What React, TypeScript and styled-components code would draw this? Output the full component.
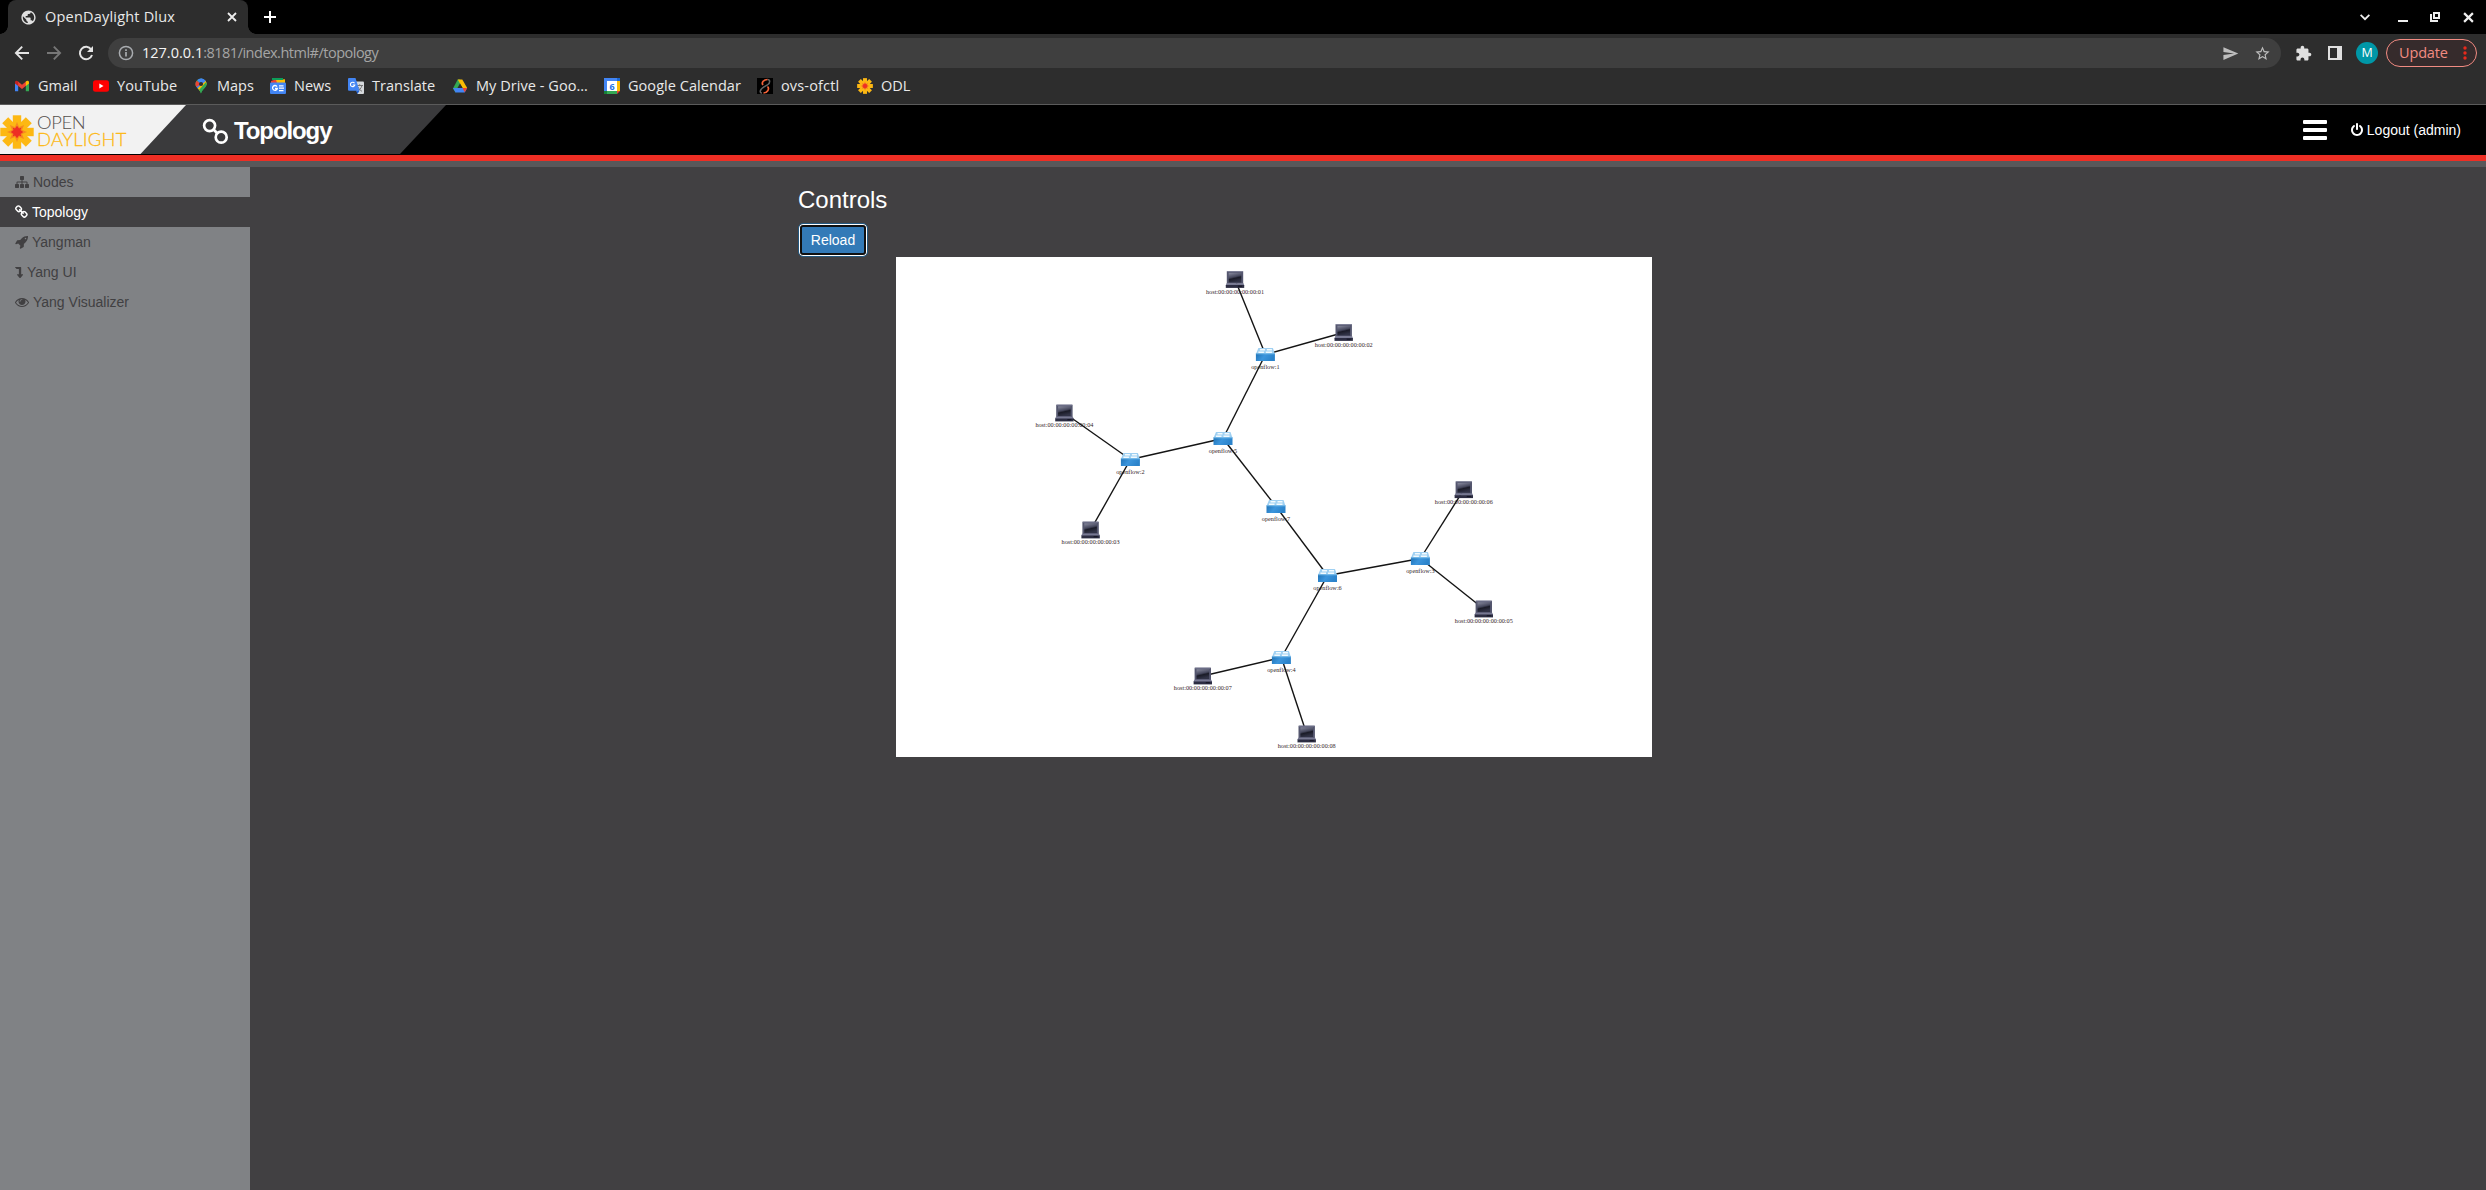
import React from "react";
import styled, { createGlobalStyle } from "styled-components";

const GlobalStyle = createGlobalStyle`
  * { box-sizing: border-box; }
  html, body, #root { margin: 0; height: 100%; }
  body {
    background: #414042;
    font-family: "Liberation Sans", Arial, sans-serif;
    font-size: 14px;
    overflow: hidden;
  }
  svg { display: block; flex: none; }
`;

/* ---------- browser window ---------- */

const Page = styled.div`
  width: 2486px;
  height: 1190px;
  display: flex;
  flex-direction: column;
`;

const Chrome = styled.div`
  flex: none;
  height: 105px;
  background: #2d2d2d;
  border-bottom: 1px solid #5b5b5b;
  font-family: "Open Sans", "Noto Sans", sans-serif;
  font-size: 14.5px;
  color: #e9e9e9;
`;

const TitleBar = styled.div`
  height: 34px;
  background: #000;
  display: flex;
  align-items: center;
  padding-left: 8px;
`;

const Tab = styled.div`
  width: 240px;
  height: 34px;
  display: flex;
  align-items: center;
  padding: 0 11px 0 12px;
  background: #2d2d2d;
  border-radius: 8px 8px 0 0;
  position: relative;
  &::before,
  &::after {
    content: "";
    position: absolute;
    bottom: 0;
    width: 8px;
    height: 8px;
  }
  &::before {
    left: -8px;
    background: radial-gradient(circle at 0 0, #000 7.5px, #2d2d2d 8px);
  }
  &::after {
    right: -8px;
    background: radial-gradient(circle at 100% 0, #000 7.5px, #2d2d2d 8px);
  }
`;

const Label = styled.span<{ $w: number; $ls?: number }>`
  flex: none;
  width: ${(p) => p.$w}px;
  letter-spacing: ${(p) => p.$ls ?? 0}px;
  white-space: nowrap;
  line-height: 20px;
`;

const TabTitle = styled(Label)`
  margin: 0 auto 0 8px;
`;

const NewTab = styled.div`
  margin-left: 16px;
`;

const WindowControls = styled.div`
  margin-left: auto;
  display: flex;
  align-items: center;
  padding-right: 12px;
`;

const Spacer = styled.div<{ $w: number }>`
  flex: none;
  width: ${(p) => p.$w}px;
`;

const Toolbar = styled.div`
  height: 38px;
  display: flex;
  align-items: center;
  padding: 0 9px 0 14px;
`;

const NavButtons = styled.div`
  display: flex;
  gap: 16px;
  margin-right: 14px;
`;

const Omnibox = styled.div`
  flex: 1;
  height: 30px;
  border-radius: 15px;
  background: #3f3f3f;
  display: flex;
  align-items: center;
  padding: 0 10px;
  color: #a5a5a5;
`;

const Url = styled(Label)`
  margin: 0 auto 0 8px;
  b {
    font-weight: 400;
    letter-spacing: 0;
    color: #f4f4f4;
  }
`;

const Avatar = styled.div`
  width: 22px;
  height: 22px;
  border-radius: 50%;
  background: #0097a7;
  color: #fff;
  font-size: 12.5px;
  line-height: 22px;
  text-align: center;
`;

const UpdatePill = styled.div`
  width: 91px;
  height: 28px;
  margin-left: 8px;
  border: 1px solid #f28b82;
  border-radius: 14px;
  background: #362b2c;
  color: #f28b82;
  display: flex;
  align-items: center;
  padding-left: 12px;
  gap: 14px;
`;

const Bookmarks = styled.div`
  height: 28px;
  display: flex;
  align-items: center;
  gap: 16px;
  padding-left: 14px;
`;

const Bookmark = styled.div`
  display: flex;
  align-items: center;
  gap: 8px;
`;

/* ---------- application ---------- */

const Header = styled.header`
  flex: none;
  height: 50px;
  background: #000;
  display: flex;
  align-items: center;
`;

const LogoPanel = styled.div`
  width: 446px;
  height: 49px;
  align-self: flex-start;
  background: #3a3a3c;
  clip-path: polygon(0 0, 100% 0, 400px 100%, 0 100%);
  display: flex;
`;

const Logo = styled.div`
  width: 186px;
  height: 49px;
  background: #f2f2f2;
  clip-path: polygon(0 0, 100% 0, 140.5px 100%, 0 100%);
  display: flex;
  align-items: center;
  padding-top: 4px;
`;

const Wordmark = styled.div`
  margin: -1px 0 0 3px;
  font-family: Lato, sans-serif;
  font-weight: 300;
  font-size: 18.4px;
  line-height: 17.5px;
`;

const WordTop = styled.div`
  color: #55504d;
  letter-spacing: -0.4px;
`;

const WordBottom = styled.div`
  color: #fdb813;
  letter-spacing: 0.25px;
  -webkit-text-stroke: 0.3px #fdb813;
`;

const SectionTitle = styled.div`
  display: flex;
  align-items: center;
  gap: 5px;
  padding: 2px 0 0 16px;
  color: #fff;
  font-size: 24px;
  font-weight: 700;
  letter-spacing: -1.1px;
  svg {
    margin-top: 1px;
  }
`;

const HeaderRight = styled.div`
  margin-left: auto;
  display: flex;
  align-items: center;
  padding: 0 25px 1px 0;
  color: #fff;
`;

const Burger = styled.div`
  width: 24px;
  display: grid;
  gap: 4px;
  margin-right: 24px;
`;

const BurgerBar = styled.i`
  height: 4px;
  border-radius: 1px;
  background: #fff;
`;

const Logout = styled.div`
  display: flex;
  align-items: center;
  gap: 4px;
  padding-top: 1px;
`;

const Stripe = styled.div<{ $color: string }>`
  flex: none;
  height: 6px;
  background: ${(p) => p.$color};
`;

const Body = styled.div`
  flex: 1;
  display: flex;
  min-height: 0;
`;

const Sidebar = styled.nav`
  width: 250px;
  background: #808285;
`;

const NavItem = styled.div<{ $active?: boolean }>`
  height: 30px;
  padding-left: 15px;
  display: flex;
  align-items: center;
  gap: 4px;
  color: ${(p) => (p.$active ? "#fff" : "#414042")};
  background: ${(p) => (p.$active ? "#414042" : "transparent")};
`;

const Main = styled.main`
  flex: 1;
  padding: 20px 0 0 548px;
`;

const Heading = styled.h3`
  margin: 0 0 10px;
  font-size: 24px;
  font-weight: 400;
  line-height: 26px;
  color: #fff;
`;

const ReloadButton = styled.button`
  display: block;
  width: 70px;
  height: 34px;
  padding: 0;
  border: 1px solid #24587f;
  border-radius: 5px;
  background: #337ab7;
  box-shadow: inset 0 0 0 1px #fff, inset 0 0 0 3px #101010;
  color: #fff;
  font: 14px "Liberation Sans", Arial, sans-serif;
`;

const Canvas = styled.div`
  width: 756px;
  height: 500px;
  margin-left: 98px;
  background: #fff;
`;

/* ---------- icons ---------- */

const FA = {
  sitemap:
    "M1792 1248v320q0 40-28 68t-68 28h-320q-40 0-68-28t-28-68v-320q0-40 28-68t68-28h96v-192h-512v192h96q40 0 68 28t28 68v320q0 40-28 68t-68 28h-320q-40 0-68-28t-28-68v-320q0-40 28-68t68-28h96v-192h-512v192h96q40 0 68 28t28 68v320q0 40-28 68t-68 28h-320q-40 0-68-28t-28-68v-320q0-40 28-68t68-28h96v-192q0-52 38-90t90-38h512v-192h-96q-40 0-68-28t-28-68v-320q0-40 28-68t68-28h320q40 0 68 28t28 68v320q0 40-28 68t-68 28h-96v192h512q52 0 90 38t38 90v192h96q40 0 68 28t28 68z",
  link: "M1456 1216q0-40-28-68l-208-208q-28-28-68-28-42 0-72 32 3 3 19 18.5t21.5 21.5 15 19 13 25.5 3.5 27.5q0 40-28 68t-68 28q-15 0-27.5-3.5t-25.5-13-19-15-21.5-21.5-18.5-19q-33 31-33 73 0 40 28 68l206 207q27 27 68 27 40 0 68-26l147-146q28-28 28-67zm-703-705q0-40-28-68l-206-207q-28-28-68-28-39 0-68 27l-147 146q-28 28-28 67 0 40 28 68l208 208q27 27 68 27 42 0 72-31-3-3-19-18.5t-21.5-21.5-15-19-13-25.5-3.5-27.5q0-40 28-68t68-28q15 0 27.5 3.5t25.5 13 19 15 21.5 21.5 18.5 19q33-31 33-73zm895 705q0 120-85 203l-147 146q-83 83-203 83-121 0-204-85l-206-207q-83-83-83-203 0-123 88-209l-88-88q-86 88-208 88-120 0-204-84l-208-208q-84-84-84-204t85-203l147-146q83-83 203-83 121 0 204 85l206 207q83 83 83 203 0 123-88 209l88 88q86-88 208-88 120 0 204 84l208 208q84 84 84 204z",
  rocket:
    "M1440 448q0-40-28-68t-68-28-68 28-28 68 28 68 68 28 68-28 28-68zm224-288q0 249-75.5 430.5t-253.5 360.5q-81 80-195 176l-20 379q-2 16-16 26l-384 224q-7 4-16 4-12 0-23-9l-64-64q-13-14-8-32l85-276-281-281-276 85q-3 1-9 1-14 0-23-9l-64-64q-17-19-5-39l224-384q10-14 26-16l379-20q96-114 176-195 188-187 358-258t431-71q14 0 24 9.5t10 22.5z",
  levelDown:
    "M128 256h700q60 0 60 60v852h180q50 0 62 36 10 30-20 66l-320 380q-50 50-100 0l-320-380q-30-36-20-66 12-36 62-36h180v-656h-250q-20 0-34-14l-196-190q-24-52 16-52z",
  eye: "M1664 960q-152-236-381-353 61 104 61 225 0 185-131.5 316.5t-316.5 131.5-316.5-131.5-131.5-316.5q0-121 61-225-229 117-381 353 133 205 333.5 326.5t434.5 121.5 434.5-121.5 333.5-326.5zm-720-384q0-20-14-34t-34-14q-125 0-214.5 89.5t-89.5 214.5q0 20 14 34t34 14 34-14 14-34q0-86 61-147t147-61q20 0 34-14t14-34zm848 384q0 34-20 69-140 230-376.5 368.5t-499.5 138.5-499.5-139-376.5-368q-20-35-20-69t20-69q140-229 376.5-368t499.5-139 499.5 139 376.5 368q20 35 20 69z",
  power:
    "M1664 896q0 156-61 298t-164 245-245 164-298 61-298-61-245-164-164-245-61-298q0-182 80.5-343t226.5-270q43-32 95.5-25t83.5 50q32 42 24.5 94.5t-49.5 84.5q-98 74-151.5 181t-53.500 228q0 104 40.5 198.5t109.5 163.5 163.5 109.5 198.5 40.5 198.5-40.5 163.5-109.5 109.5-163.5 40.5-198.5q0-121-53.5-228t-151.5-181q-42-32-49.5-84.5t24.5-94.5q31-43 84-50t95 25q146 109 226.5 270t80.5 343zm-640-768v640q0 52-38 90t-90 38-90-38-38-90v-640q0-52 38-90t90-38 90 38 38 90z",
};

const FaGlyph = ({ d, x = 0, w = 1792 }: { d: string; x?: number; w?: number }) => (
  <svg width={w / 128} height={14} viewBox={`${x} 0 ${w} 1792`} fill="currentColor">
    <path d={d} />
  </svg>
);

const Icon = ({ d, size = 18, color = "#e0e0e0" }: { d: string; size?: number; color?: string }) => (
  <svg width={size} height={size} viewBox="0 0 24 24" fill={color}>
    <path d={d} />
  </svg>
);

const Cross = ({ size, width }: { size: number; width: number }) => (
  <svg width={size} height={size} viewBox="0 0 10 10" stroke="#eee" strokeWidth={width}>
    <path d="M1 1l8 8M9 1l-8 8" />
  </svg>
);

const Sunburst = ({ size }: { size: number }) => (
  <svg width={size} height={size} viewBox="0 0 34 34">
    <g transform="translate(17 17)">
      {[0, 45, 90, 135].map((a) => (
        <rect key={a} x="-4.2" y="-16.7" width="8.4" height="33.4" fill="#fdb813" transform={`rotate(${a})`} />
      ))}
      {[0, 45, 90, 135].map((a) => (
        <path key={a} d="M-4.2 0L0 -10L4.2 0L0 10Z" fill="#f68b1f" transform={`rotate(${a})`} />
      ))}
      <path d="M0-6.2L2-3.5L4.4-4.4L3.5-2L6.2 0L3.5 2L4.4 4.4L2 3.5L0 6.2L-2 3.5L-4.4 4.4L-3.5 2L-6.2 0L-3.5-2L-4.4-4.4L-2-3.5Z" fill="#ee2e24" />
    </g>
  </svg>
);

const bookmarks: { name: string; w: number; ls?: number; icon: React.ReactNode }[] = [
  {
    name: "Gmail",
    w: 39,
    icon: (
      <svg width="16" height="16" viewBox="0 0 16 16">
        <path d="M1 4v9.300h3.200V7z" fill="#4285f4" />
        <path d="M15 4v9.300h-3.200V7z" fill="#34a853" />
        <path d="M4 3.500l4 3.200 4-3.200v4.200l-4 3.200-4-3.200z" fill="#ea4335" />
        <path d="M1 4.200C1 2.700 2.800 2.200 4.200 3.400v4.500L1 5.500z" fill="#c5221f" />
        <path d="M15 4.200c0-1.500-1.800-2-3.200-.8v4.500L15 5.500z" fill="#fbbc04" />
      </svg>
    ),
  },
  {
    name: "YouTube",
    w: 60,
    ls: 0.1,
    icon: (
      <svg width="16" height="16" viewBox="0 0 16 16">
        <rect y="2.300" width="16" height="11.400" rx="2.500" fill="#f00" />
        <path d="M6.300 5.600v4.800L10.500 8z" fill="#fff" />
      </svg>
    ),
  },
  {
    name: "Maps",
    w: 37,
    icon: (
      <svg width="16" height="16" viewBox="0 0 16 16">
        <defs>
          <clipPath id="pin">
            <path d="M8 0.500a5.600 5.600 0 0 1 5.600 5.600C13.600 9.500 9.500 11 8 15.500 6.500 11 2.400 9.500 2.400 6.100A5.600 5.600 0 0 1 8 .5z" />
          </clipPath>
        </defs>
        <g clipPath="url(#pin)">
          <rect width="16" height="16" fill="#34a853" />
          <path d="M8 0h8v2L9 8 4 13 1 10z" fill="#4285f4" />
          <path d="M3 12L14 1l1 4-9 9z" fill="#fbbc04" />
          <path d="M6 16V12L14 3l3 4-7 9z" fill="#34a853" />
          <path d="M0 0l8 6-6 4z" fill="#ea4335" />
          <path d="M4 0h8l2 2-5 4-5-4z" fill="#4285f4" />
        </g>
        <circle cx="8" cy="6" r="2.100" fill="#2d2d2d" />
      </svg>
    ),
  },
  {
    name: "News",
    w: 38,
    icon: (
      <svg width="16" height="16" viewBox="0 0 16 16">
        <path d="M1 3l6-2 3 4H1z" fill="#ea4335" />
        <path d="M6 1.800l9-.6V5H7z" fill="#fbbc04" />
        <path d="M2 0h11v2H2z" fill="#0c9d58" />
        <rect y="4.500" width="16" height="11.500" rx="1" fill="#4285f4" />
        <path d="M7 8.600A2.400 2.400 0 1 0 7.300 10.500H5" fill="none" stroke="#fff" strokeWidth="1.300" />
        <path d="M9 7.800h4.500M9 10.200h5M9 12.600h4.500" stroke="#fff" strokeWidth="1.200" />
      </svg>
    ),
  },
  {
    name: "Translate",
    w: 64,
    ls: 0.05,
    icon: (
      <svg width="16" height="16" viewBox="0 0 16 16">
        <path d="M6 3.500h9a1 1 0 0 1 1 1V15a1 1 0 0 1-1 1H9.500z" fill="#d6d9dc" />
        <path d="M8.500 7.500H15M11.700 6.300v1.200M14 7.500C13.200 10.500 11 12.500 9.500 13M10 9c1 2 2.500 3.500 4 4.300" stroke="#777" fill="none" />
        <path d="M1 0h6.500l4 12.800H1a1 1 0 0 1-1-1V1a1 1 0 0 1 1-1z" fill="#4285f4" />
        <path d="M8 12.800h3.500L9.500 16z" fill="#1f5fd0" />
        <path d="M6.500 5.200A2.200 2.200 0 1 0 6.800 7H4.700" fill="none" stroke="#fff" strokeWidth="1.100" />
      </svg>
    ),
  },
  {
    name: "My Drive - Goo…",
    w: 112,
    ls: 0.05,
    icon: (
      <svg width="16" height="16" viewBox="0 0 16 16">
        <path d="M5.700 1.500H8L10 5 5.500 13 3.500 14.500 1 10.500z" fill="#34a853" />
        <path d="M5.700 1.500h4.600L15.200 10H10.500z" fill="#fbbc04" />
        <path d="M1 10h14.200l-2.500 4.500H3.500z" fill="#4285f4" />
        <path d="M10.500 10h4.700l-2.500 4.200z" fill="#ea4335" />
        <path d="M8 5.500L10.600 10H5.400z" fill="#2d2d2d" />
      </svg>
    ),
  },
  {
    name: "Google Calendar",
    w: 113,
    ls: 0.05,
    icon: (
      <svg width="16" height="16" viewBox="0 0 16 16">
        <rect width="13" height="16" fill="#4285f4" />
        <rect x="13" width="3" height="3" fill="#1967d2" />
        <rect x="13" y="3" width="3" height="10" fill="#fbbc04" />
        <rect y="13" width="13" height="3" fill="#34a853" />
        <rect y="13" width="3" height="3" fill="#188038" />
        <path d="M13 13h3l-3 3z" fill="#ea4335" />
        <rect x="3" y="3" width="10" height="10" fill="#fff" />
        <text x="8" y="11.500" fontSize="9" fontWeight="700" textAnchor="middle" fill="#1a73e8" fontFamily="Open Sans, sans-serif">6</text>
      </svg>
    ),
  },
  {
    name: "ovs-ofctl",
    w: 60,
    ls: 0.15,
    icon: (
      <svg width="16" height="16" viewBox="0 0 16 16" fill="none" strokeWidth="1.500">
        <rect width="16" height="16" fill="#000" />
        <path d="M10.500 1.500C13.500 1.500 13 5 11 6.500S6 9 4 11.500c-1.500 2.500-.5 3.500 1 3.500" stroke="#666" />
        <path d="M10.500 1.500C7 1.500 4 4.500 6 7M10.500 8.500c2.500 2.500-.5 6.500-4 6.500" stroke="#f4633a" strokeWidth="1.700" />
      </svg>
    ),
  },
  { name: "ODL", w: 32, icon: <Sunburst size={16} /> },
];

/* ---------- topology data ---------- */

type NodeKind = "host" | "switch";
interface TopoNode {
  id: string;
  kind: NodeKind;
  x: number;
  y: number;
}

const nodes: TopoNode[] = [
  { id: "host:00:00:00:00:00:01", kind: "host", x: 339, y: 22.5 },
  { id: "host:00:00:00:00:00:02", kind: "host", x: 447.7, y: 75.5 },
  { id: "openflow:1", kind: "switch", x: 369.4, y: 97.5 },
  { id: "openflow:5", kind: "switch", x: 327, y: 181.5 },
  { id: "openflow:2", kind: "switch", x: 234.4, y: 202.5 },
  { id: "host:00:00:00:00:00:04", kind: "host", x: 168.4, y: 156 },
  { id: "host:00:00:00:00:00:03", kind: "host", x: 194.6, y: 273 },
  { id: "openflow:7", kind: "switch", x: 380, y: 249.5 },
  { id: "openflow:6", kind: "switch", x: 431.5, y: 318.5 },
  { id: "openflow:3", kind: "switch", x: 524.4, y: 301.5 },
  { id: "host:00:00:00:00:00:06", kind: "host", x: 567.8, y: 232.7 },
  { id: "host:00:00:00:00:00:05", kind: "host", x: 587.8, y: 352 },
  { id: "openflow:4", kind: "switch", x: 385.4, y: 400.5 },
  { id: "host:00:00:00:00:00:07", kind: "host", x: 306.8, y: 419 },
  { id: "host:00:00:00:00:00:08", kind: "host", x: 410.7, y: 477 },
];

const links: [number, number][] = [
  [0, 2], [1, 2], [2, 3], [3, 4], [4, 5], [4, 6], [3, 7],
  [7, 8], [8, 9], [9, 10], [9, 11], [8, 12], [12, 13], [12, 14],
];

const HostShape = () => (
  <g>
    <rect x="-8.2" y="-8.3" width="16.4" height="12.5" fill="#54566e" />
    <path d="M-7.7 -7.900h15.400" stroke="#80829b" strokeWidth=".9" />
    <rect x="-6.3" y="-6.700" width="12.600" height="9.700" fill="url(#screen)" />
    <path d="M-8.500 3.800h17l.8 2.200h-18.600z" fill="#777992" />
    <rect x="-9.200" y="5.500" width="18.400" height="2.900" fill="#2c2d42" />
    <path d="M3 6.700h4" stroke="#0d0d18" strokeWidth=".8" />
  </g>
);

const SwitchShape = () => (
  <g>
    <path d="M-7 -6.500h14.500l2 6h-19z" fill="#9fd0f2" />
    <path d="M-5.500 -4.700h5M1.500 -4.700h5M-7 -2.300h5.500M.5 -2.300h6" stroke="#f2fafe" strokeWidth="1.400" />
    <rect x="-9.500" y="-1" width="19" height="7.500" fill="url(#box)" />
    <path d="M-9.500 -.7h19" stroke="#7cc0ee" strokeWidth=".8" />
  </g>
);

const Topology = () => (
  <svg width="756" height="500" viewBox="0 0 756 500">
    <defs>
      <linearGradient id="screen" x1="0" y1="0" x2=".3" y2="1">
        <stop offset="0" stopColor="#8a8ca0" />
        <stop offset=".5" stopColor="#45475c" />
        <stop offset=".65" stopColor="#1a1b27" />
        <stop offset="1" stopColor="#303245" />
      </linearGradient>
      <linearGradient id="box" x1="0" y1="0" x2="1" y2=".3">
        <stop offset="0" stopColor="#1f73b7" />
        <stop offset=".5" stopColor="#3c95dc" />
        <stop offset="1" stopColor="#2b83cb" />
      </linearGradient>
    </defs>
    <g fontFamily="Liberation Serif, serif" fontSize="6.25" fill="#33241f" textAnchor="middle">
      {nodes.map((n) => (
        <text
          key={n.id}
          x={n.x}
          y={n.y + 14.2}
          textLength={n.kind === "host" ? 58 : 28.5}
          lengthAdjust="spacingAndGlyphs"
        >
          {n.id}
        </text>
      ))}
    </g>
    <g stroke="#141414" strokeWidth="1.4">
      {links.map(([a, b]) => (
        <line key={`${a}-${b}`} x1={nodes[a].x} y1={nodes[a].y} x2={nodes[b].x} y2={nodes[b].y} />
      ))}
    </g>
    {nodes.map((n) => (
      <g key={n.id} transform={`translate(${n.x} ${n.y})`}>
        {n.kind === "host" ? <HostShape /> : <SwitchShape />}
      </g>
    ))}
  </svg>
);

export default function App() {
  return (
    <Page>
      <GlobalStyle />
      <Chrome>
        <TitleBar>
          <Tab>
            <Icon
              size={17}
              d="M12 2C6.480 2 2 6.480 2 12s4.480 10 10 10 10-4.480 10-10S17.520 2 12 2zm-1 17.930c-3.950-.49-7-3.850-7-7.930 0-.62.080-1.210.21-1.790L9 15v1c0 1.100.9 2 2 2v1.930zm6.900-2.540c-.26-.81-1-1.390-1.900-1.390h-1v-3c0-.55-.45-1-1-1H8v-2h2c.55 0 1-.45 1-1V7h2c1.100 0 2-.9 2-2v-.41c2.930 1.190 5 4.060 5 7.410 0 2.080-.8 3.970-2.100 5.390z"
            />
            <TabTitle $w={131} $ls={0.2}>OpenDaylight Dlux</TabTitle>
            <Cross size={10} width={1.8} />
          </Tab>
          <NewTab>
            <svg width="12" height="12" viewBox="0 0 12 12" stroke="#fff" strokeWidth="2">
              <path d="M6 0v12M0 6h12" />
            </svg>
          </NewTab>
          <WindowControls>
            <svg width="10" height="10" viewBox="0 0 10 10" fill="none" stroke="#eee" strokeWidth="1.800">
              <path d="M.6 2.800l4.400 4.400 4.400-4.400" />
            </svg>
            <Spacer $w={28} />
            <svg width="10" height="10" viewBox="0 0 10 10" fill="#eee">
              <path d="M0 8h10v2H0z" />
            </svg>
            <Spacer $w={22} />
            <svg width="10" height="10" viewBox="0 0 10 10" fill="none" stroke="#eee" strokeWidth="2">
              <path d="M4 1h5v5H4zM1 2v7h7" />
            </svg>
            <Spacer $w={23} />
            <Cross size={11} width={2} />
          </WindowControls>
        </TitleBar>
        <Toolbar>
          <NavButtons>
            <svg width="16" height="16" viewBox="0 0 16 16" fill="none" stroke="#e4e4e4" strokeWidth="1.900">
              <path d="M8.200 1.600L1.900 8l6.300 6.400M2 8h13" />
            </svg>
            <svg width="16" height="16" viewBox="0 0 16 16" fill="none" stroke="#777" strokeWidth="1.900">
              <path d="M7.800 1.600L14.100 8l-6.300 6.400M14 8H1" />
            </svg>
            <svg width="16" height="16" viewBox="0 0 16 16" fill="none" stroke="#e4e4e4" strokeWidth="2">
              <path d="M13.200 4.500A6.200 6.200 0 1 0 14 10" />
              <path d="M15 1v6H9z" fill="#e4e4e4" stroke="none" />
            </svg>
          </NavButtons>
          <Omnibox>
            <svg width="16" height="16" viewBox="0 0 16 16" fill="none" stroke="#a9acb0" strokeWidth="1.500">
              <circle cx="8" cy="8" r="6.600" />
              <path d="M8 7v4.500M8 4.300v1.700" strokeWidth="1.700" />
            </svg>
            <Url $w={236} $ls={-0.5}>
              <b>127.0.0.1</b>:8181/index.html#/topology
            </Url>
            <Icon size={17} color="#bdbdbd" d="M2.010 21L23 12 2.010 3 2 10l15 2-15 2z" />
            <Spacer $w={15} />
            <Icon size={17} color="#bdbdbd" d="M22 9.240l-7.190-.62L12 2 9.190 8.630 2 9.240l5.460 4.730L5.820 21 12 17.270 18.180 21l-1.630-7.030L22 9.240zM12 15.400l-3.760 2.270 1-4.280-3.320-2.880 4.380-.38L12 6.100l1.710 4.040 4.380.38-3.320 2.880 1 4.280L12 15.400z" />
          </Omnibox>
          <Spacer $w={14} />
          <Icon size={17} d="M20.500 11H19V7c0-1.100-.9-2-2-2h-4V3.500C13 2.120 11.880 1 10.500 1S8 2.120 8 3.500V5H4c-1.100 0-1.990.9-1.990 2v3.800H3.500c1.490 0 2.700 1.210 2.700 2.700s-1.210 2.700-2.700 2.700H2V20c0 1.100.9 2 2 2h3.800v-1.500c0-1.490 1.210-2.700 2.700-2.700 1.490 0 2.700 1.210 2.700 2.700V22H17c1.100 0 2-.9 2-2v-4h1.500c1.380 0 2.500-1.120 2.500-2.500S21.880 11 20.500 11z" />
          <Spacer $w={16} />
          <svg width="14" height="14" viewBox="0 0 14 14">
            <path d="M0 0h14v14H0zM2 2v10h7V2z" fill="#e0e0e0" fillRule="evenodd" />
          </svg>
          <Spacer $w={14} />
          <Avatar>M</Avatar>
          <UpdatePill>
            <Label $w={50} $ls={-0.15}>Update</Label>
            <svg width="4" height="14" viewBox="0 0 4 14" fill="#e8291c">
              <circle cx="2" cy="2" r="1.700" />
              <circle cx="2" cy="7" r="1.700" />
              <circle cx="2" cy="12" r="1.700" />
            </svg>
          </UpdatePill>
        </Toolbar>
        <Bookmarks>
          {bookmarks.map((b) => (
            <Bookmark key={b.name}>
              {b.icon}
              <Label $w={b.w} $ls={b.ls}>{b.name}</Label>
            </Bookmark>
          ))}
        </Bookmarks>
      </Chrome>

      <Header>
        <LogoPanel>
          <Logo>
            <Sunburst size={34} />
            <Wordmark>
              <WordTop>OPEN</WordTop>
              <WordBottom>DAYLIGHT</WordBottom>
            </Wordmark>
          </Logo>
          <SectionTitle>
            <svg width="27" height="27" viewBox="0 0 27 27" fill="none" stroke="#fff" strokeWidth="2.700">
              <circle cx="7.600" cy="7.600" r="5.500" />
              <circle cx="19.200" cy="19.200" r="5.500" />
              <path d="M11.500 11.500l3.800 3.800" />
            </svg>
            Topology
          </SectionTitle>
        </LogoPanel>
        <HeaderRight>
          <Burger>
            <BurgerBar />
            <BurgerBar />
            <BurgerBar />
          </Burger>
          <Logout>
            <FaGlyph d={FA.power} x={128} w={1536} />
            Logout (admin)
          </Logout>
        </HeaderRight>
      </Header>
      <Stripe $color="#ee2e24" />
      <Stripe $color="#58585a" />

      <Body>
        <Sidebar>
          <NavItem>
            <FaGlyph d={FA.sitemap} />
            Nodes
          </NavItem>
          <NavItem $active>
            <FaGlyph d={FA.link} x={16} w={1664} />
            Topology
          </NavItem>
          <NavItem>
            <FaGlyph d={FA.rocket} w={1664} />
            Yangman
          </NavItem>
          <NavItem>
            <FaGlyph d={FA.levelDown} x={96} w={1024} />
            Yang UI
          </NavItem>
          <NavItem>
            <FaGlyph d={FA.eye} />
            Yang Visualizer
          </NavItem>
        </Sidebar>
        <Main>
          <Heading>Controls</Heading>
          <ReloadButton>Reload</ReloadButton>
          <Canvas>
            <Topology />
          </Canvas>
        </Main>
      </Body>
    </Page>
  );
}
